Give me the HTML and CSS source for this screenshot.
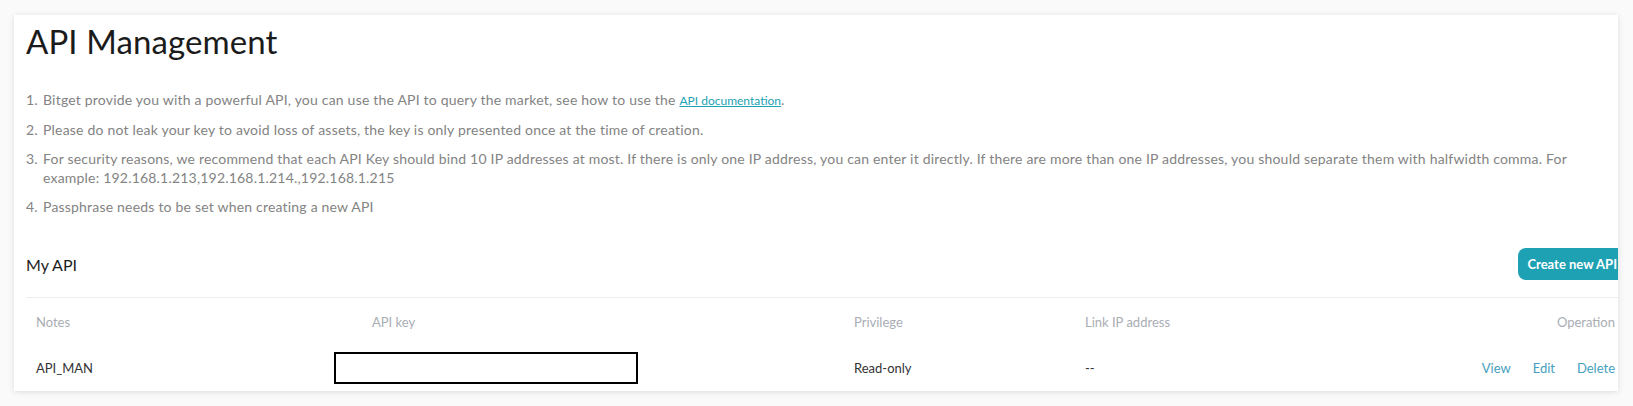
FILE: index.html
```html
<!DOCTYPE html>
<html lang="en">
<head>
<meta charset="utf-8">
<title>API Management</title>
<link rel="stylesheet" href="styles.css">
</head>
<body>
<main class="card">
  <h1 class="title">API Management</h1>
  <ol class="notes">
    <li class="note"><span class="num">1.</span><span class="txt">Bitget provide you with a powerful API, you can use the API to query the market, see how to use the <a class="doc-link" href="#">API documentation</a>.</span></li>
    <li class="note"><span class="num">2.</span><span class="txt">Please do not leak your key to avoid loss of assets, the key is only presented once at the time of creation.</span></li>
    <li class="note"><span class="num">3.</span><span class="txt">For security reasons, we recommend that each API Key should bind 10 IP addresses at most. If there is only one IP address, you can enter it directly. If there are more than one IP addresses, you should separate them with halfwidth comma. For example: 192.168.1.213,192.168.1.214.,192.168.1.215</span></li>
    <li class="note"><span class="num">4.</span><span class="txt">Passphrase needs to be set when creating a new API</span></li>
  </ol>
  <div class="mine-head">
    <h2 class="mine-title">My API</h2>
    <button class="create-btn" type="button">Create new API</button>
  </div>
  <div class="api-table">
    <div class="th">Notes</div>
    <div class="th">API key</div>
    <div class="th">Privilege</div>
    <div class="th">Link IP address</div>
    <div class="th th-op">Operation</div>
    <div class="td">API_MAN</div>
    <div class="td"><div class="redact"></div></div>
    <div class="td">Read-only</div>
    <div class="td">--</div>
    <div class="td td-op"><a href="#" class="op">View</a><a href="#" class="op">Edit</a><a href="#" class="op">Delete</a></div>
  </div>
</main>
</body>
</html>
```

FILE: styles.css
```css
html, body {
  margin: 0;
  padding: 0;
  background: #fafafa;
}
body {
  padding: 15px 15px 15px 14px;
  font-family: Lato, "Noto Sans", sans-serif;
}
.card {
  background: #fff;
  width: 1604px;
  height: 376px;
  box-sizing: border-box;
  padding: 6px 0 0 12px;
  overflow: hidden;
  box-shadow: 0 1px 6px rgba(0, 0, 0, 0.12);
}
.title {
  margin: 0;
  font-size: 33px;
  line-height: 40px;
  font-weight: 400;
  letter-spacing: 0.1px;
  color: #1b1b1b;
}
.notes {
  list-style: none;
  margin: 29px 0 0 0;
  padding: 0;
  color: #838383;
  font-size: 14px;
  line-height: 19px;
  letter-spacing: 0.2px;
}
.note {
  display: flex;
  margin-bottom: 10px;
  padding-right: 2px;
}
.num {
  flex: none;
  width: 17px;
}
.doc-link {
  color: #1da2b4;
  font-size: 12px;
  letter-spacing: 0;
  text-decoration: underline;
}
.mine-head {
  display: flex;
  align-items: center;
  justify-content: space-between;
  margin: 32px -8px 0 0;
  height: 32px;
  padding-bottom: 17px;
  border-bottom: 1px solid #eeeeee;
}
.mine-title {
  margin: 0;
  font-size: 16px;
  font-weight: 400;
  color: #1e1e1e;
}
.create-btn {
  border: none;
  background: #1ea2b3;
  color: #fff;
  font-family: Lato, "Noto Sans", sans-serif;
  font-size: 13px;
  font-weight: 700;
  height: 32px;
  padding: 0 9px;
  border-radius: 8px;
}
.api-table {
  display: grid;
  grid-template-columns: 336px 482px 231px 1fr auto;
  grid-template-rows: 48px 44px;
  align-items: center;
  font-size: 13px;
}
.th {
  color: #a9adb4;
  padding-left: 10px;
}
.td {
  color: #333;
  padding-left: 10px;
}
.th-op, .td-op {
  text-align: right;
  padding-right: 3px;
}
.redact {
  margin-left: -38px;
  width: 300px;
  height: 28px;
  border: 2px solid #000;
  background: #fff;
}
.op {
  color: #45a0bd;
  text-decoration: none;
  margin-left: 22px;
}
```
